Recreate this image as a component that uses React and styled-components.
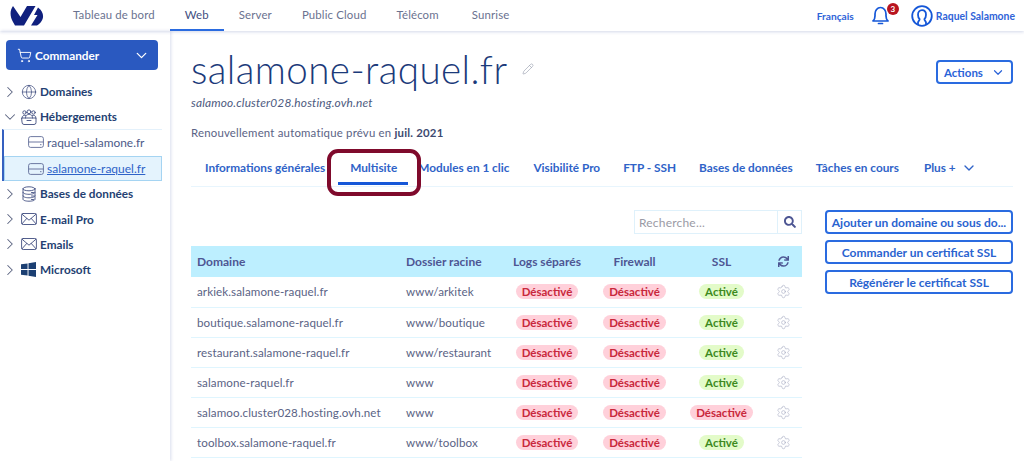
import React from "react";
import styled, { createGlobalStyle } from "styled-components";
import { ChevronDown, ChevronRight, ShoppingCart, Globe, Pencil, Settings } from "lucide-react";
import { FaSearch, FaSync } from "react-icons/fa";

const Global = createGlobalStyle`
  html, body { margin: 0; padding: 0; height: 100%; background: #fff; overflow: hidden; }
  body { font-family: Lato, "Noto Sans", sans-serif; color: #4d5693; }
  * { box-sizing: border-box; }
`;

const Page = styled.div`
  width: 1024px;
  height: 461px;
  overflow: hidden;
  position: relative;
  display: flex;
  flex-direction: column;
`;

const TopBar = styled.header`
  height: 31px;
  flex: none;
  display: flex;
  align-items: center;
  padding-left: 10px;
  padding-right: 9px;
  box-shadow: 0 1px 3px rgba(60, 80, 160, 0.22);
  position: relative;
  z-index: 2;
`;

const Nav = styled.nav`
  display: flex;
  height: 100%;
  margin-left: 14px;
  flex: 1;
`;

const NavItem = styled.a`
  height: 31px;
  padding: 0 15px;
  display: flex;
  align-items: center;
  font-size: 11.4px;
  letter-spacing: 0.15px;
  color: ${(p) => (p.$active ? "#3f4f7f" : "#6a7290")};
  border-bottom: 2px solid ${(p) => (p.$active ? "#2a6be0" : "transparent")};
  &:last-child { margin-left: 3px; }
`;

const Lang = styled.span`
  font-size: 10.2px;
  font-weight: 700;
  color: #2f63d8;
  margin-right: 17px;
`;

const BellWrap = styled.span`
  position: relative;
  display: flex;
  color: #1557d8;
  margin-right: 21px;
`;

const Badge = styled.span`
  position: absolute;
  top: -3px;
  right: -9px;
  width: 12px;
  height: 12px;
  border-radius: 50%;
  background: #b8141f;
  color: #fff;
  font-size: 8px;
  font-weight: 700;
  display: flex;
  align-items: center;
  justify-content: center;
`;

const UserName = styled.span`
  font-size: 10.4px;
  font-weight: 700;
  color: #2f63d8;
  margin-left: 3px;
`;

const Body = styled.div`
  flex: 1;
  display: flex;
  min-height: 0;
`;

const Sidebar = styled.aside`
  width: 170px;
  flex: none;
  padding-top: 9px;
  box-shadow: 1px 0 3px rgba(60, 80, 160, 0.2);
`;

const OrderButton = styled.button`
  width: 152px;
  height: 30px;
  margin: 0 0 9px 6px;
  display: flex;
  align-items: center;
  padding: 0 8px 0 11px;
  border: 0;
  border-radius: 4px;
  background: #2a59c0;
  color: #fff;
  font: 700 11.8px Lato, sans-serif;
  gap: 3px;
  span { flex: 1; text-align: left; }
`;

const TreeRow = styled.div`
  height: 25.2px;
  display: flex;
  align-items: center;
  padding-left: 1px;
  font-size: 11.75px;
  font-weight: 700;
  color: #243f72;
`;

const Arrow = styled.span`
  display: flex;
  color: #5a6380;
  width: 18px;
  margin-right: 2px;
`;

const TreeIcon = styled.span`
  display: flex;
  color: #3f4d80;
  width: 17px;
  margin-right: 2px;
`;

const SubList = styled.div`
  margin-left: 2px;
  width: 160px;
  border-left: 2px solid #3560c0;
  border-top: 1px solid #e4f1fb;
`;

const SubRow = styled.div`
  height: ${(p) => (p.$selected ? "25px" : "26px")};
  display: flex;
  align-items: center;
  gap: 3px;
  padding-left: ${(p) => (p.$selected ? "23px" : "24px")};
  padding-bottom: ${(p) => (p.$selected ? "0" : "2px")};
  font-size: ${(p) => (p.$selected ? "12px" : "11.9px")};
  color: ${(p) => (p.$selected ? "#2f63c8" : "#4d5a88")};
  text-decoration: ${(p) => (p.$selected ? "underline" : "none")};
  background: ${(p) => (p.$selected ? "#e4f3fd" : "transparent")};
  border: ${(p) => (p.$selected ? "1px solid #a5d4f2" : "0")};
  svg { color: #5d6a96; flex: none; }
`;

const Main = styled.main`
  flex: 1;
  padding: 13px 11px 0 21px;
  min-width: 0;
`;

const TitleRow = styled.div`
  display: flex;
  align-items: flex-start;
  justify-content: space-between;
`;

const TitleLeft = styled.div`
  display: flex;
  align-items: center;
  gap: 15px;
`;

const Title = styled.h1`
  margin: 0;
  font-size: 38.6px;
  line-height: 50px;
  font-weight: 300;
  color: #1b3a7a;
  letter-spacing: 0.4px;
`;

const ActionsButton = styled.button`
  margin-top: 16px;
  width: 77px;
  height: 24px;
  border: 2px solid #2a6be0;
  border-radius: 4px;
  background: #fff;
  color: #2a63d8;
  font: 700 11.5px Lato, sans-serif;
  display: flex;
  align-items: center;
  justify-content: center;
  gap: 8px;
`;

const Host = styled.div`
  font-size: 11.9px;
  font-style: italic;
  color: #4d5a80;
  margin-top: 1px;
  letter-spacing: 0.15px;
`;

const Renewal = styled.div`
  font-size: 11.4px;
  color: #5a6385;
  margin-top: 16px;
  letter-spacing: 0.2px;
  b { color: #3d4a70; }
`;

const Tabs = styled.div`
  display: flex;
  align-items: center;
  height: 33px;
  margin-top: 15px;
  padding-left: 14px;
  padding-bottom: 5px;
  border-bottom: 1px solid #e8f5fd;
  position: relative;
`;

const Tab = styled.a`
  font-size: 11.8px;
  font-weight: 700;
  color: #2f63c8;
  white-space: nowrap;
  position: relative;
  margin-right: ${(p) => p.$gap}px;
  display: flex;
  align-items: center;
  gap: 5px;
  ${(p) =>
    p.$active &&
    `&::after { content: ""; position: absolute; left: -12px; right: -11px; bottom: -10px; height: 3px; background: #1557d8; }`}
`;

const Highlight = styled.div`
  position: absolute;
  left: 327px;
  top: 149px;
  width: 94px;
  height: 47px;
  border: 4px solid #7f0a2c;
  border-radius: 11px;
  pointer-events: none;
  z-index: 3;
`;

const Content = styled.div`
  display: flex;
  margin-top: 23px;
  gap: 23px;
`;

const TableColumn = styled.div`
  width: 611px;
  flex: none;
`;

const SearchBox = styled.div`
  width: 168px;
  height: 24px;
  margin-left: auto;
  display: flex;
  border: 1px solid #dff1fb;
  margin-bottom: 12px;
`;

const SearchInput = styled.div`
  flex: 1;
  font-size: 12px;
  color: #9a9aa5;
  padding-left: 4px;
  display: flex;
  align-items: center;
  letter-spacing: 0.2px;
`;

const SearchBtn = styled.div`
  width: 24px;
  border-left: 1px solid #dff1fb;
  display: flex;
  align-items: center;
  justify-content: center;
  color: #4d5693;
`;

const Table = styled.table`
  width: 611px;
  border-collapse: collapse;
  table-layout: fixed;
`;

const Th = styled.th`
  height: 31px;
  background: #bdefff;
  font-size: 12px;
  font-weight: 700;
  color: #4d5693;
  padding: 0 0 0 ${(p) => (p.$left ? "6px" : "0")};
  text-align: ${(p) => (p.$left ? "left" : "center")};
  svg { display: block; margin: 0 auto; }
`;

const Td = styled.td`
  height: 30px;
  border-bottom: 1px solid #dff5fe;
  font-size: 11.6px;
  color: #5a6385;
  padding: 0 0 0 ${(p) => (p.$left ? "6px" : "0")};
  text-align: ${(p) => (p.$left ? "left" : "center")};
  white-space: nowrap;
  letter-spacing: 0.1px;
  svg { display: block; margin: 0 auto; color: #a8aec4; }
`;

const Pill = styled.span`
  display: inline-block;
  height: 15px;
  line-height: 15px;
  padding: 0 6px;
  border-radius: 8px;
  font-size: 11.5px;
  font-weight: 700;
  letter-spacing: 0;
  background: ${(p) => (p.$on ? "#e3fbc9" : "#ffd0da")};
  color: ${(p) => (p.$on ? "#3d8a1e" : "#c9283c")};
`;

const SideActions = styled.div`
  width: 188px;
  flex: none;
  display: flex;
  flex-direction: column;
  gap: 6px;
`;

const ActionBtn = styled.button`
  height: 24px;
  border: 2px solid #2a6be0;
  border-radius: 4px;
  background: #fff;
  color: #2a63d0;
  font: 700 12px Lato, sans-serif;
  white-space: nowrap;
  padding: 0;
`;

const rows = [
  ["arkiek.salamone-raquel.fr", "www/arkitek", true],
  ["boutique.salamone-raquel.fr", "www/boutique", true],
  ["restaurant.salamone-raquel.fr", "www/restaurant", true],
  ["salamone-raquel.fr", "www", true],
  ["salamoo.cluster028.hosting.ovh.net", "www", false],
  ["toolbox.salamone-raquel.fr", "www/toolbox", true],
];

function Logo() {
  return (
    <svg width="34" height="20" viewBox="0 0 34 20" fill="#10207e">
      <path d="M3 0 C0 4 -0.5 10 3 16 L5 19.5 H14 L25.5 0 H17 L10.5 11 Z" />
      <path d="M28 1.5 L24 9 H27.5 L21 19.5 H27 C33 16 36.5 8 28 1.5 Z" />
    </svg>
  );
}

function WindowsIcon() {
  return (
    <svg width="15" height="15" viewBox="0 0 16 16" fill="#1b3f72">
      <path d="M0 2.5 L7 1.5 V7.5 H0 Z M8 1.3 L16 0 V7.5 H8 Z M0 8.5 H7 V14.5 L0 13.5 Z M8 8.5 H16 V16 L8 14.7 Z" />
    </svg>
  );
}

function line(size, children) {
  return (
    <svg width={size} height={size} viewBox="0 0 16 16" fill="none" stroke="currentColor" strokeWidth="0.9" strokeLinejoin="round" strokeLinecap="round">
      {children}
    </svg>
  );
}

const HostingIcon = () =>
  line(16, (
    <>
      <circle cx="3.5" cy="3.5" r="1.7" />
      <circle cx="8" cy="2.8" r="1.9" />
      <circle cx="12.5" cy="3.5" r="1.7" />
      <path d="M1 9 C1 6.5 3 6 4.5 6.5 M15 9 C15 6.5 13 6 11.5 6.5 M4.5 9 C4.5 6 6 5.5 8 5.5 C10 5.5 11.5 6 11.5 9" />
      <path d="M1 9 H15 V13.5 A2 2 0 0 1 13 15.5 H3 A2 2 0 0 1 1 13.5 Z" />
      <path d="M6 11.5 H10" />
    </>
  ));

const DatabaseIcon = () =>
  line(16, (
    <>
      <ellipse cx="8" cy="2.8" rx="6" ry="2" />
      <path d="M2 2.8 V13.2 C2 14.4 4.7 15.2 8 15.2 C11.3 15.2 14 14.4 14 13.2 V2.8" />
      <path d="M2 6.3 C2 7.5 4.7 8.3 8 8.3 C11.3 8.3 14 7.5 14 6.3 M2 9.8 C2 11 4.7 11.8 8 11.8 C11.3 11.8 14 11 14 9.8" />
      <path d="M10.5 6.5 H12.5 M10.5 10 H12.5 M10.5 13.5 H12.5" />
    </>
  ));

const MailIcon = () =>
  line(16, (
    <>
      <rect x="0.6" y="2.5" width="14.8" height="11" rx="1.6" />
      <path d="M1 3.2 L8 9.2 L15 3.2 M1 12.8 L5.8 7.4 M15 12.8 L10.2 7.4" />
    </>
  ));

const DriveIcon = () => (
  <svg width="16" height="12" viewBox="0 0 16 12" fill="none" stroke="currentColor" strokeWidth="0.9">
    <rect x="0.6" y="0.6" width="14.8" height="10.8" rx="2" />
    <path d="M0.6 6 H15.4" />
    <path d="M12 8.7 H13.5" />
  </svg>
);

const UserIcon = () => (
  <svg width="22" height="22" viewBox="0 0 22 22" fill="none" stroke="#1557d8" strokeWidth="1.8">
    <circle cx="11" cy="11" r="9.8" />
    <path d="M7 20 V17.5 C7 16 8.6 15.6 8.6 14.2 C7.4 13 7 11.5 7 9.8 C7 7 8.7 5.2 11 5.2 C13.3 5.2 15 7 15 9.8 C15 11.5 14.6 13 13.4 14.2 C13.4 15.6 15 16 15 17.5 V20" />
  </svg>
);

const BellIcon = () => (
  <svg width="19" height="19" viewBox="0 0 19 19" fill="none" stroke="currentColor" strokeWidth="1.7" strokeLinejoin="round">
    <path d="M2 15 H17 C15.4 13.6 15 12.4 15 10 V8 C15 4.5 12.8 1.5 9.5 1.5 C6.2 1.5 4 4.5 4 8 V10 C4 12.4 3.6 13.6 2 15 Z" />
    <path d="M7.5 17.5 H11.5" strokeLinecap="round" />
  </svg>
);

function TreeItem({ open, icon, children }) {
  return (
    <TreeRow>
      <Arrow>{open ? <ChevronDown size={18} strokeWidth={1.4} /> : <ChevronRight size={18} strokeWidth={1.4} />}</Arrow>
      <TreeIcon>{icon}</TreeIcon>
      {children}
    </TreeRow>
  );
}

export default function App() {
  return (
    <Page>
      <Global />
      <TopBar>
        <Logo />
        <Nav>
          <NavItem>Tableau de bord</NavItem>
          <NavItem $active>Web</NavItem>
          <NavItem>Server</NavItem>
          <NavItem>Public Cloud</NavItem>
          <NavItem>Télécom</NavItem>
          <NavItem>Sunrise</NavItem>
        </Nav>
        <Lang>Français</Lang>
        <BellWrap>
          <BellIcon />
          <Badge>3</Badge>
        </BellWrap>
        <UserIcon />
        <UserName>Raquel Salamone</UserName>
      </TopBar>
      <Body>
        <Sidebar>
          <OrderButton>
            <ShoppingCart size={15} strokeWidth={1.5} />
            <span>Commander</span>
            <ChevronDown size={17} strokeWidth={1.8} />
          </OrderButton>
          <TreeItem icon={<Globe size={16} strokeWidth={1.1} />}>Domaines</TreeItem>
          <TreeItem open icon={<HostingIcon />}>Hébergements</TreeItem>
          <SubList>
            <SubRow><DriveIcon />raquel-salamone.fr</SubRow>
            <SubRow $selected><DriveIcon />salamone-raquel.fr</SubRow>
          </SubList>
          <TreeItem icon={<DatabaseIcon />}>Bases de données</TreeItem>
          <TreeItem icon={<MailIcon />}>E-mail Pro</TreeItem>
          <TreeItem icon={<MailIcon />}>Emails</TreeItem>
          <TreeItem icon={<WindowsIcon />}>Microsoft</TreeItem>
        </Sidebar>
        <Main>
          <TitleRow>
            <div>
              <TitleLeft>
                <Title>salamone-raquel.fr</Title>
                <Pencil size={12} color="#9aa0b0" strokeWidth={1.3} />
              </TitleLeft>
              <Host>salamoo.cluster028.hosting.ovh.net</Host>
            </div>
            <ActionsButton>Actions <ChevronDown size={17} strokeWidth={2} /></ActionsButton>
          </TitleRow>
          <Renewal>Renouvellement automatique prévu en <b>juil. 2021</b></Renewal>
          <Tabs>
            <Tab $gap={25}>Informations générales</Tab>
            <Tab $active $gap={21}>Multisite</Tab>
            <Tab $gap={24}>Modules en 1 clic</Tab>
            <Tab $gap={23}>Visibilité Pro</Tab>
            <Tab $gap={23}>FTP - SSH</Tab>
            <Tab $gap={23}>Bases de données</Tab>
            <Tab $gap={25}>Tâches en cours</Tab>
            <Tab $gap={0}>Plus + <ChevronDown size={16} strokeWidth={2} /></Tab>
          </Tabs>
          <Content>
            <TableColumn>
              <SearchBox>
                <SearchInput>Recherche...</SearchInput>
                <SearchBtn><FaSearch size={12} /></SearchBtn>
              </SearchBox>
              <Table>
                <colgroup>
                  <col width="209" />
                  <col width="103" />
                  <col width="88" />
                  <col width="87" />
                  <col width="87" />
                  <col width="37" />
                </colgroup>
                <thead>
                  <tr>
                    <Th $left>Domaine</Th>
                    <Th $left>Dossier racine</Th>
                    <Th>Logs séparés</Th>
                    <Th>Firewall</Th>
                    <Th>SSL</Th>
                    <Th><FaSync size={11} /></Th>
                  </tr>
                </thead>
                <tbody>
                  {rows.map(([domain, folder, ssl]) => (
                    <tr key={domain}>
                      <Td $left>{domain}</Td>
                      <Td $left>{folder}</Td>
                      <Td><Pill>Désactivé</Pill></Td>
                      <Td><Pill>Désactivé</Pill></Td>
                      <Td><Pill $on={ssl}>{ssl ? "Activé" : "Désactivé"}</Pill></Td>
                      <Td><Settings size={15} strokeWidth={1} /></Td>
                    </tr>
                  ))}
                </tbody>
              </Table>
            </TableColumn>
            <SideActions>
              <ActionBtn>Ajouter un domaine ou sous do...</ActionBtn>
              <ActionBtn>Commander un certificat SSL</ActionBtn>
              <ActionBtn>Régénérer le certificat SSL</ActionBtn>
            </SideActions>
          </Content>
        </Main>
      </Body>
      <Highlight />
    </Page>
  );
}
